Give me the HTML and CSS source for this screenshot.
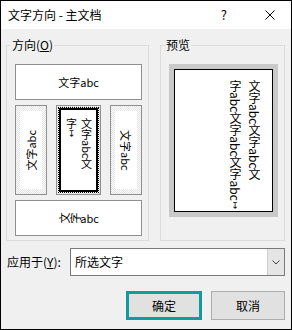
FILE: index.html
```html
<!DOCTYPE html>
<html lang="zh-CN">
<head>
    <meta charset="UTF-8">
    <title>文字方向 - 主文档</title>
    <link rel="stylesheet" href="styles.css">
</head>
<body>
    <div class="dialog">
        <!-- Title bar -->
        <div class="titlebar">
            <span class="title">文字方向 - 主文档</span>
            <span class="help">?</span>
            <span class="close">
                <svg width="10" height="10" viewBox="0 0 10 10">
                    <path d="M0.5 0.5 L9.5 9.5 M9.5 0.5 L0.5 9.5" stroke="#000" stroke-width="1" fill="none"/>
                </svg>
            </span>
        </div>

        <div class="content">
            <div class="groups">
                <!-- Direction options -->
                <fieldset class="group group-dir">
                    <legend>方向(<u>O</u>)</legend>
                    <div class="options">
                        <div class="opt opt-wide"><span>文字abc</span></div>
                        <div class="opt opt-hatch"><div class="paper"><span class="text-up">文字abc</span></div></div>
                        <div class="opt opt-sel">
                            <div class="ring">
                                <div class="sel-box">
                                    <p class="vert vert-small">文字abc文<br>字<span class="mark">↧</span></p>
                                </div>
                            </div>
                        </div>
                        <div class="opt opt-hatch"><div class="paper"><span class="text-down">文字abc</span></div></div>
                        <div class="opt opt-wide"><span><span class="rot">文</span><span class="rot">字</span>abc</span></div>
                    </div>
                </fieldset>

                <!-- Preview -->
                <fieldset class="group group-preview">
                    <legend>预览</legend>
                    <div class="preview">
                        <div class="page">
                            <p class="vert vert-page">文字abc文字abc文<br>字abc文字abc文字abc<span class="mark">↧</span></p>
                        </div>
                    </div>
                </fieldset>
            </div>

            <!-- Apply to -->
            <div class="apply">
                <label class="apply-label">应用于(<u>Y</u>):</label>
                <div class="select">
                    <span class="select-value">所选文字</span>
                    <span class="select-btn">
                        <svg width="8" height="5" viewBox="0 0 8 5">
                            <path d="M0.5 0.5 L4 4 L7.5 0.5" stroke="#444" stroke-width="1" fill="none"/>
                        </svg>
                    </span>
                </div>
            </div>

            <!-- Buttons -->
            <div class="actions">
                <button class="btn btn-default">确定</button>
                <button class="btn btn-cancel">取消</button>
            </div>
        </div>
    </div>
</body>
</html>
```

FILE: styles.css
```css
* {
    box-sizing: border-box;
}

body {
    margin: 0;
    font-family: "Noto Sans CJK SC", "Noto Sans", sans-serif;
    font-size: 12px;
    color: #000;
}

.dialog {
    width: 292px;
    height: 330px;
    border: 1px solid #000;
    background: #f0f0f0;
    display: flex;
    flex-direction: column;
}

/* Title bar */
.titlebar {
    height: 28px;
    background: #fff;
    display: flex;
    align-items: center;
    padding: 0 16px 0 7px;
}

.title {
    flex: 1;
    line-height: 16px;
}

.help {
    font-size: 13px;
    margin-right: 38px;
    line-height: 16px;
}

.close {
    display: flex;
}

/* Content */
.content {
    padding: 8px 6px 0 5px;
}

.groups {
    display: flex;
    gap: 11px;
}

.group {
    margin: 0;
    min-width: 0;
    border: 1px solid #dcdcdc;
    padding: 11px 6px 4px 8px;
}

.group legend {
    padding: 0 1px;
    margin-left: -4px;
    line-height: 16px;
}

.group-dir {
    width: 143px;
}

.group-preview {
    width: 125px;
}

/* Direction options */
.options {
    display: grid;
    grid-template-columns: 32px 45px 32px;
    grid-template-rows: 36px 90px 36px;
    gap: 5px 9px;
}

.opt {
    border: 1px solid #8f8f8f;
    background: #fff;
    display: flex;
    align-items: center;
    justify-content: center;
    font-size: 11px;
    line-height: 14px;
}

.opt-wide {
    grid-column: 1 / 4;
}

.opt-hatch {
    background: repeating-conic-gradient(#e2e2e2 0 25%, #fff 0 50%) 0 0 / 2px 2px;
    padding: 5px 4px 5px 4px;
    align-items: stretch;
}

.paper {
    flex: 1;
    background: #fff;
    display: flex;
    align-items: center;
    justify-content: center;
}

.text-up {
    writing-mode: vertical-rl;
    text-orientation: sideways;
    transform: rotate(180deg);
}

.text-down {
    writing-mode: vertical-rl;
    text-orientation: sideways;
}

.rot {
    display: inline-block;
    transform: rotate(-90deg);
}

.opt-sel {
    padding: 1px;
    align-items: stretch;
    background: repeating-conic-gradient(#d8d8d8 0 25%, #fff 0 50%) 0 0 / 2px 2px;
}

.ring {
    flex: 1;
    display: flex;
    border: 1px dotted #000;
}

.sel-box {
    flex: 1;
    border: 2px solid #000;
    background: #fff;
    display: flex;
    align-items: flex-start;
    justify-content: center;
    padding-top: 8px;
}

.vert {
    margin: 0;
    writing-mode: vertical-rl;
    text-orientation: mixed;
}

.vert-small {
    font-size: 11px;
    line-height: 15px;
}

.mark {
    text-orientation: upright;
    font-family: "DejaVu Sans", sans-serif;
    font-size: 9px;
}

/* Preview */
.preview {
    height: 153px;
    background: #c9c9c9;
    padding: 5px;
    display: flex;
}

.page {
    flex: 1;
    background: #fff;
    border: 1px solid #000;
    display: flex;
    justify-content: flex-end;
    padding: 10px 8px 0 0;
}

.vert-page {
    font-size: 12px;
    line-height: 19px;
}

/* Apply row */
.apply {
    display: flex;
    align-items: center;
    margin-top: 7px;
    margin-left: 1px;
}

.apply-label {
    width: 63px;
    line-height: 16px;
}

.select {
    flex: 1;
    height: 28px;
    border: 1px solid #7a7a7a;
    background: #fff;
    display: flex;
}

.select-value {
    flex: 1;
    padding-left: 4px;
    line-height: 26px;
}

.select-btn {
    width: 17px;
    background: #e5e5e5;
    border-left: 1px solid #cfcfcf;
    display: flex;
    align-items: center;
    justify-content: center;
}

/* Buttons */
.actions {
    display: flex;
    justify-content: flex-end;
    gap: 9px;
    margin-top: 15px;
}

.btn {
    height: 29px;
    font-family: inherit;
    font-size: 12px;
    background: #e1e1e1;
    border: 1px solid #adadad;
    padding: 0;
    color: #000;
}

.btn-default {
    width: 76px;
    border: 3px solid #0f9c9c;
}

.btn-cancel {
    width: 74px;
}
```
